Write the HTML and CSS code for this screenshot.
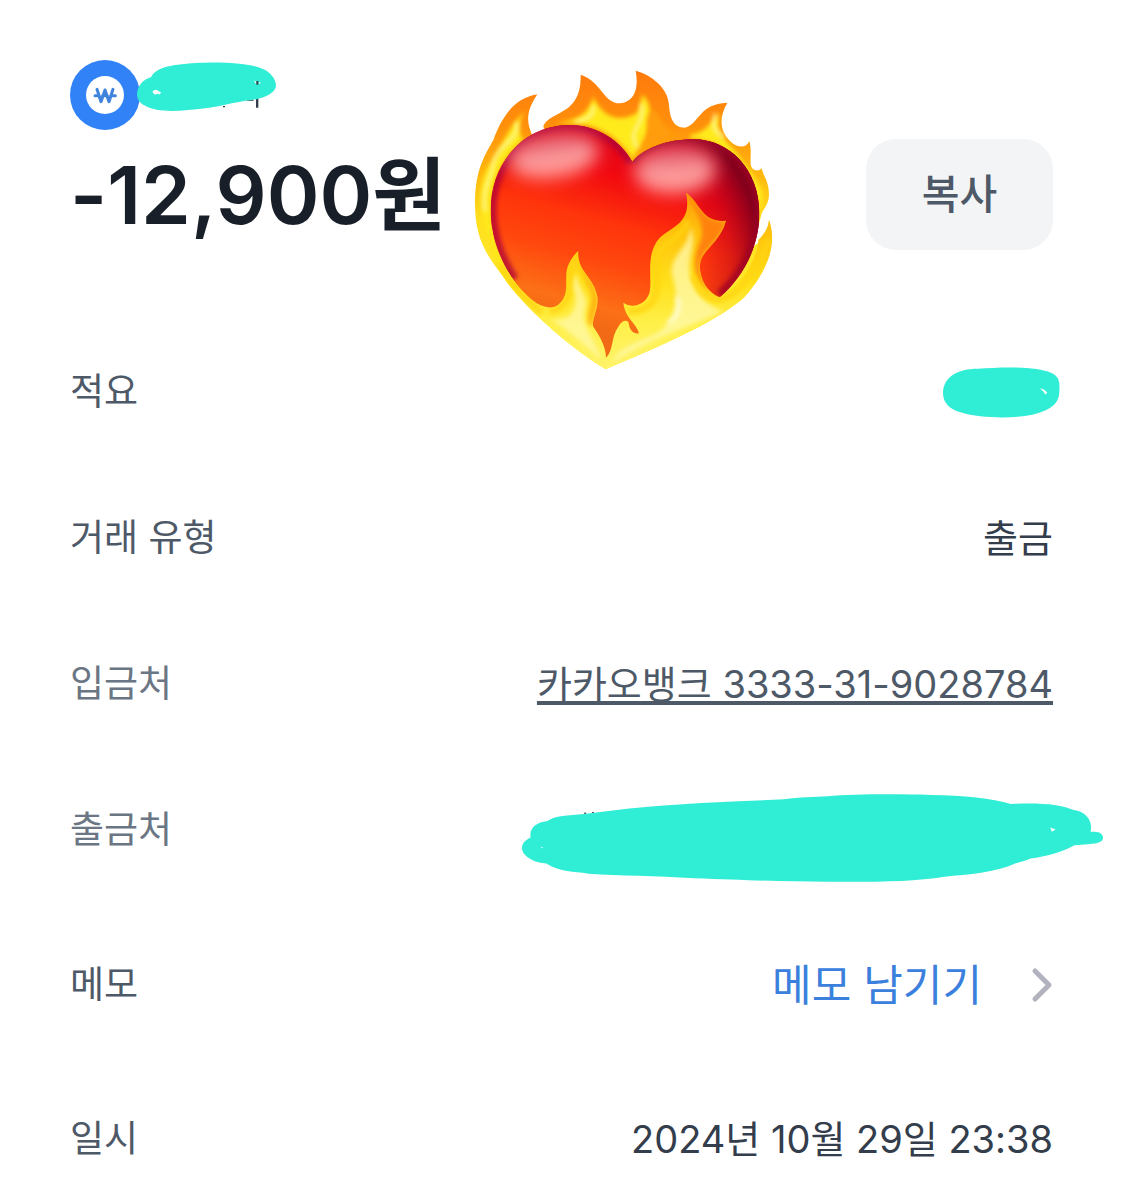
FILE: index.html
```html
<!DOCTYPE html>
<html lang="ko">
<head>
  <meta charset="UTF-8">
  <meta name="viewport" content="width=device-width, initial-scale=1.0">
  <title>거래 내역</title>
  <link rel="stylesheet" href="styles.css">
</head>
<body>

  <main>
    <header class="summary">
      <div class="account">
        <svg class="coin" viewBox="0 0 210 210" aria-hidden="true">
          <circle cx="105" cy="105" r="105" fill="#3182f6"/>
          <circle cx="105" cy="105" r="57" fill="#fff"/>
          <g fill="none" stroke="#3f83dc" stroke-width="9" stroke-linecap="round" stroke-linejoin="round">
            <path d="M81 88 L93 125 L105 90 L117 125 L129 88"/>
            <path d="M75 107 H86 M98 107 H112 M124 107 H136"/>
          </g>
        </svg>
        <!-- nome coberto -->
        <svg class="mark markName" viewBox="0 0 420 150" aria-hidden="true">
          <path d="M258 132 h6 v4 h-6z M330 113 h20 v3 h-20z M357 105 h7 v32 h-7z" fill="#333d4b"/>
          <path d="M0 96 C2 70 18 53 42 46 C60 10 120 8 175 3 C240 -1 340 1 380 22 C400 31 417 52 417 70 C417 92 385 109 345 114 C290 120 250 134 205 139 C130 148 62 154 22 130 C8 123 0 111 0 96Z"/>
          <path d="M46 89 q8 -9 17 -3 l9 5 -3 6 -10 -1 -6 2z M350 55 l10 6 -3 5z M365 60 l7 2 -6 4z" fill="#fff"/>
          <path d="M358 57 h6 v11 h-6z" fill="#333d4b"/>
        </svg>
      </div>

      <div class="amountRow">
        <h1>-12,900원</h1>
        <button id="btnCopy" type="button">복사</button>
      </div>

      <svg class="heart" viewBox="0 0 990 960" role="img" aria-label="불타는 하트">
        <defs>
          <linearGradient id="backFire" x1="0" y1="0" x2="0" y2="1">
            <stop offset="0" stop-color="#ff7a0c"/>
            <stop offset=".18" stop-color="#ff8f0b"/>
            <stop offset=".34" stop-color="#ffb50d"/>
            <stop offset=".5" stop-color="#ffe01c"/>
            <stop offset="1" stop-color="#fff04a"/>
          </linearGradient>
          <linearGradient id="frontFire" gradientUnits="userSpaceOnUse" x1="0" y1="400" x2="0" y2="930">
            <stop offset="0" stop-color="#ff9a0a"/>
            <stop offset=".2" stop-color="#ffc00d"/>
            <stop offset=".5" stop-color="#ffe01a"/>
            <stop offset=".75" stop-color="#fff04b"/>
            <stop offset="1" stop-color="#fff36a"/>
          </linearGradient>
          <linearGradient id="body" gradientUnits="userSpaceOnUse" x1="560" y1="220" x2="400" y2="800">
            <stop offset="0" stop-color="#d8001c"/>
            <stop offset=".25" stop-color="#f20a10"/>
            <stop offset=".48" stop-color="#ff340b"/>
            <stop offset=".68" stop-color="#ff480e"/>
            <stop offset=".9" stop-color="#fc7016"/>
            <stop offset="1" stop-color="#f26a16"/>
          </linearGradient>
          <radialGradient id="shade" gradientUnits="userSpaceOnUse" cx="390" cy="600" r="540">
            <stop offset=".6" stop-color="#c8001d" stop-opacity="0"/>
            <stop offset=".78" stop-color="#b8001d" stop-opacity=".45"/>
            <stop offset=".95" stop-color="#80001c" stop-opacity=".95"/>
          </radialGradient>
          <linearGradient id="shine" x1="0" y1="0" x2="0" y2="1">
            <stop offset="0" stop-color="#dc4058"/>
            <stop offset=".65" stop-color="#ffa6a4"/>
            <stop offset="1" stop-color="#ff8a84"/>
          </linearGradient>
          <clipPath id="heartClip">
            <path d="M517 305 C480 240 410 195 330 195 C190 195 92 310 92 450 C92 580 170 690 240 750 C310 810 400 850 437 900 C470 850 700 780 780 712 C850 650 898 560 898 460 C898 330 810 238 700 238 C620 238 550 265 517 305Z"/>
          </clipPath>
          <clipPath id="frontClip">
            <path d="M95 500 C105 590 160 680 230 730 C270 752 300 745 315 705 C328 665 300 625 355 572 C350 635 402 650 412 710 C417 745 393 780 400 800 C420 830 438 860 438 893 C462 870 452 830 475 800 Q490 775 505 785 C508 805 515 822 537 820 C530 790 495 775 490 728 C520 750 565 730 570 690 C575 650 560 590 590 545 C620 500 700 500 678 398 C720 425 725 490 798 482 C780 550 722 570 720 615 C718 660 745 700 780 712 C850 670 895 590 895 540 Q925 510 927 480 C960 570 900 660 850 715 C750 800 590 860 437 928 C340 870 240 780 190 725 C110 640 80 570 95 500Z"/>
          </clipPath>
          <filter id="soft" filterUnits="userSpaceOnUse" x="0" y="0" width="990" height="960"><feGaussianBlur stdDeviation="25"/></filter>
          <filter id="fine" filterUnits="userSpaceOnUse" x="0" y="0" width="990" height="960"><feGaussianBlur stdDeviation="6"/></filter>
        </defs>

        <!-- flames behind the heart -->
        <path fill="url(#backFire)" d="M437 928 C300 840 200 740 150 675 C80 590 45 540 45 430 C45 330 75 285 100 240 C120 185 155 115 232 103 C205 145 195 175 215 222 L300 300 L250 200 C270 150 365 170 362 44 C425 65 430 130 480 130 C530 125 535 75 527 32 C575 45 625 85 627 135 C630 175 640 203 675 203 C720 190 715 132 802 128 C775 175 780 215 812 245 C835 265 858 265 868 243 C880 290 860 320 885 330 Q895 335 905 325 C908 345 927 360 927 405 C925 440 908 445 903 468 L880 560 Q925 530 927 480 C955 570 900 660 850 715 C740 800 600 860 437 928Z"/>
        <g fill="#ffea1c" filter="url(#fine)">
          <path d="M290 190 C330 180 380 180 400 110 C420 160 470 195 530 160 C545 140 540 115 548 105 C585 140 570 200 550 240 L517 295 C470 220 400 190 320 190Z"/>
          <path d="M690 225 C740 220 750 185 780 160 C760 220 800 240 830 280 C860 320 885 350 905 390 C912 420 900 440 897 450 C870 330 800 240 690 235Z"/>
          <path d="M85 320 C120 280 140 200 195 155 C170 190 175 220 190 240 C130 290 100 350 95 400 C80 460 100 540 110 570 C50 470 55 370 85 320Z"/>
        </g>
        <g fill="none" stroke="#fff59a" stroke-width="9" stroke-linecap="round" filter="url(#fine)">
          <path d="M400 140 C400 180 370 175 350 186 M545 135 C555 200 500 205 530 260 M765 165 C755 205 765 215 790 230"/>
          <path d="M170 190 C180 240 115 250 100 310 C95 360 65 380 75 450"/>
        </g>
        <path d="M570 160 C600 130 600 220 650 220 C610 235 590 240 560 260 C585 220 545 200 570 160Z" fill="#ff9d0b" filter="url(#fine)"/>

        <!-- glossy heart -->
        <g clip-path="url(#heartClip)">
          <path fill="url(#body)" d="M60 160 H940 V940 H60Z"/>
          <path fill="url(#shade)" d="M60 160 H940 V940 H60Z"/>
          <path d="M517 305 C480 240 410 195 330 195 C190 195 92 310 92 450 C92 530 120 600 160 660" fill="none" stroke="#b0003a" stroke-width="36" opacity=".75" filter="url(#fine)"/>
          <path d="M517 305 C550 265 620 238 700 238 C810 238 898 330 898 460 C898 560 850 640 780 705" fill="none" stroke="#9c0026" stroke-width="28" opacity=".75" filter="url(#fine)"/>
          <ellipse cx="280" cy="285" rx="135" ry="70" transform="rotate(-8 280 285)" fill="url(#shine)" filter="url(#soft)"/>
          <ellipse cx="645" cy="328" rx="122" ry="74" transform="rotate(-3 645 328)" fill="url(#shine)" filter="url(#soft)"/>
        </g>

        <!-- flames in front -->
        <g clip-path="url(#frontClip)">
          <path fill="url(#frontFire)" d="M30 390 H960 V940 H30Z"/>
          <path d="M60 460 L110 460 L180 700 L100 660Z" fill="#ffe51c" filter="url(#fine)"/>
          <path d="M678 398 C720 425 725 490 798 482 C780 550 722 570 720 615 C718 660 745 700 790 712 C700 690 690 610 722 540 C735 500 710 450 678 398Z" fill="#ff8208" filter="url(#fine)"/>
          <path d="M355 572 C350 635 402 650 412 710 C417 745 393 780 400 800 L385 790 C380 750 405 720 390 690 C375 650 360 640 355 572Z" fill="#ffb20d" filter="url(#fine)"/>
          <g fill="#fffab0" filter="url(#fine)">
            <path d="M690 500 C715 550 680 590 690 640 C700 700 750 740 790 755 C690 800 560 840 460 905 C470 870 520 850 570 830 C650 800 655 720 640 660 C615 590 690 570 690 500Z" opacity=".75"/>
            <path d="M350 640 C355 690 390 710 375 750 C360 790 400 830 425 900 C370 850 320 810 270 775 C340 790 350 740 345 700 Q325 675 350 640Z" opacity=".7"/>
          </g>
          <g fill="none" stroke="#ffd310" stroke-width="14" stroke-linecap="round" filter="url(#fine)">
            <path d="M680 485 C670 540 585 550 590 610 C600 700 590 750 510 755"/>
            <path d="M700 650 C720 720 770 735 820 700 C870 660 910 600 925 540"/>
            <path d="M325 630 C335 680 330 740 275 755"/>
            <path d="M125 620 C150 670 190 710 240 755"/>
          </g>
          <path d="M650 710 C665 740 650 775 620 790" fill="none" stroke="#fff" stroke-width="12" opacity=".6" filter="url(#fine)"/>
        </g>
      </svg>
    </header>

    <dl class="details">
      <div class="item">
        <dt>적요</dt>
        <dd>
          <svg class="mark markNote" viewBox="0 0 350 152" aria-hidden="true">
            <path d="M0 76 C2 30 42 5 105 5 C170 0 280 -4 325 18 C347 28 350 46 348 70 C350 105 325 125 290 136 C240 155 120 156 55 136 C18 126 -1 105 0 76Z"/>
            <path d="M290 64 Q302 64 312 77 L306 82 Q300 70 290 64Z" fill="#fff"/>
          </svg>
        </dd>
      </div>
      <div class="item">
        <dt>거래 유형</dt>
        <dd>출금</dd>
      </div>
      <div class="item light">
        <dt>입금처</dt>
        <dd><a class="bank" href="#">카카오뱅크 3333-31-9028784</a></dd>
      </div>
      <div class="item light">
        <dt>출금처</dt>
        <dd>
          <svg class="mark markFrom" viewBox="0 0 1485 263" preserveAspectRatio="none" aria-hidden="true">
            <path d="M159 55 h5 v6 h-5z M179 54 h5 v6 h-5z" fill="#4e5968"/>
            <path d="M22 130 C18 103 35 85 65 81 C85 64 115 65 160 60 C270 42 350 35 460 27 C530 22 600 20 670 16 C710 9 745 10 780 7 C850 0 960 0 1045 3 C1130 4 1200 13 1250 30 C1325 26 1375 31 1410 48 C1443 52 1460 83 1453 113 C1478 110 1485 120 1485 131 C1484 148 1465 150 1412 153 C1380 174 1340 186 1300 193 C1280 202 1285 200 1262 207 C1210 235 1140 241 1080 247 C1000 262 900 263 780 262 C680 262 580 258 440 252 C340 244 250 244 170 238 C130 231 100 235 62 208 C20 203 0 180 0 162 C0 148 8 138 22 130Z"/>
            <path d="M1350 100 l14 6 -10 7z M48 159 l6 0 -4 4z" fill="#fff"/>
          </svg>
        </dd>
      </div>
      <div class="item memo">
        <dt>메모</dt>
        <dd>
          <a class="memoLink" href="#">
            메모 남기기
            <svg class="arrow" viewBox="0 0 22 36" aria-hidden="true">
              <path d="M4 4 L18 18 L4 32" fill="none" stroke="#b0b3bd" stroke-width="5" stroke-linecap="round" stroke-linejoin="round"/>
            </svg>
          </a>
        </dd>
      </div>
      <div class="item">
        <dt>일시</dt>
        <dd>2024년 10월 29일 23:38</dd>
      </div>
    </dl>
  </main>

</body>
</html>
```
FILE: styles.css
```css
body {
  font-family: Inter, "Noto Sans CJK KR", sans-serif;
  background-color: #fff;
  color: #333d4b;
  margin: 0;
}

main {
  padding: 60px 70px 0;
}

.summary {
  position: relative;
  margin-bottom: 114px;
}

.account {
  display: flex;
  height: 70px;
  margin-bottom: 9px;
}

.coin {
  width: 70px;
  height: 70px;
}

.mark {
  display: block;
  fill: #30edd5;
  overflow: visible;
}

.markName {
  width: 140px;
  height: 50px;
  margin: 2px 0 0 -3px;
}

.markNote {
  width: 117px;
  height: 51px;
  margin-right: -7px;
}

/* passa um pouco da margem direita */
.markFrom {
  width: 581px;
  height: 88px;
  margin: 16px -50px 0 0;
}

.amountRow {
  display: flex;
  justify-content: space-between;
  align-items: center;
}

h1 {
  margin: 0;
  color: #191f28;
  font-size: 80px;
  font-weight: 600;
  line-height: 111px;
}

#btnCopy {
  width: 187px;
  height: 111px;
  padding: 0 0 8px;
  border: none;
  border-radius: 30px;
  background-color: #f2f4f6;
  color: #4e5968;
  font-family: inherit;
  font-size: 41px;
  font-weight: 500;
  cursor: pointer;
}

/* figurinha por cima do cabeçalho */
.heart {
  position: absolute;
  top: 0;
  left: 390px;
  width: 330px;
  height: 320px;
}

.details {
  display: flex;
  flex-direction: column;
  gap: 90px;
  margin: 0;
}

.item {
  display: flex;
  justify-content: space-between;
  align-items: center;
  height: 56px;
  font-size: 37px;
  line-height: 56px;
}

.item.memo {
  height: 73px;
}

dt {
  color: #4e5968;
}

.light dt {
  color: #6b7684;
}

dd {
  margin: 0;
  font-size: 38px;
}

.bank {
  color: #4e5968;
  text-underline-offset: 3px;
  text-decoration-thickness: 4px;
  text-decoration-skip-ink: none;
}

.memoLink {
  display: flex;
  align-items: center;
  gap: 49px;
  color: #3a80dc;
  font-size: 43px;
  text-decoration: none;
}

.arrow {
  width: 22px;
  height: 36px;
}
```
